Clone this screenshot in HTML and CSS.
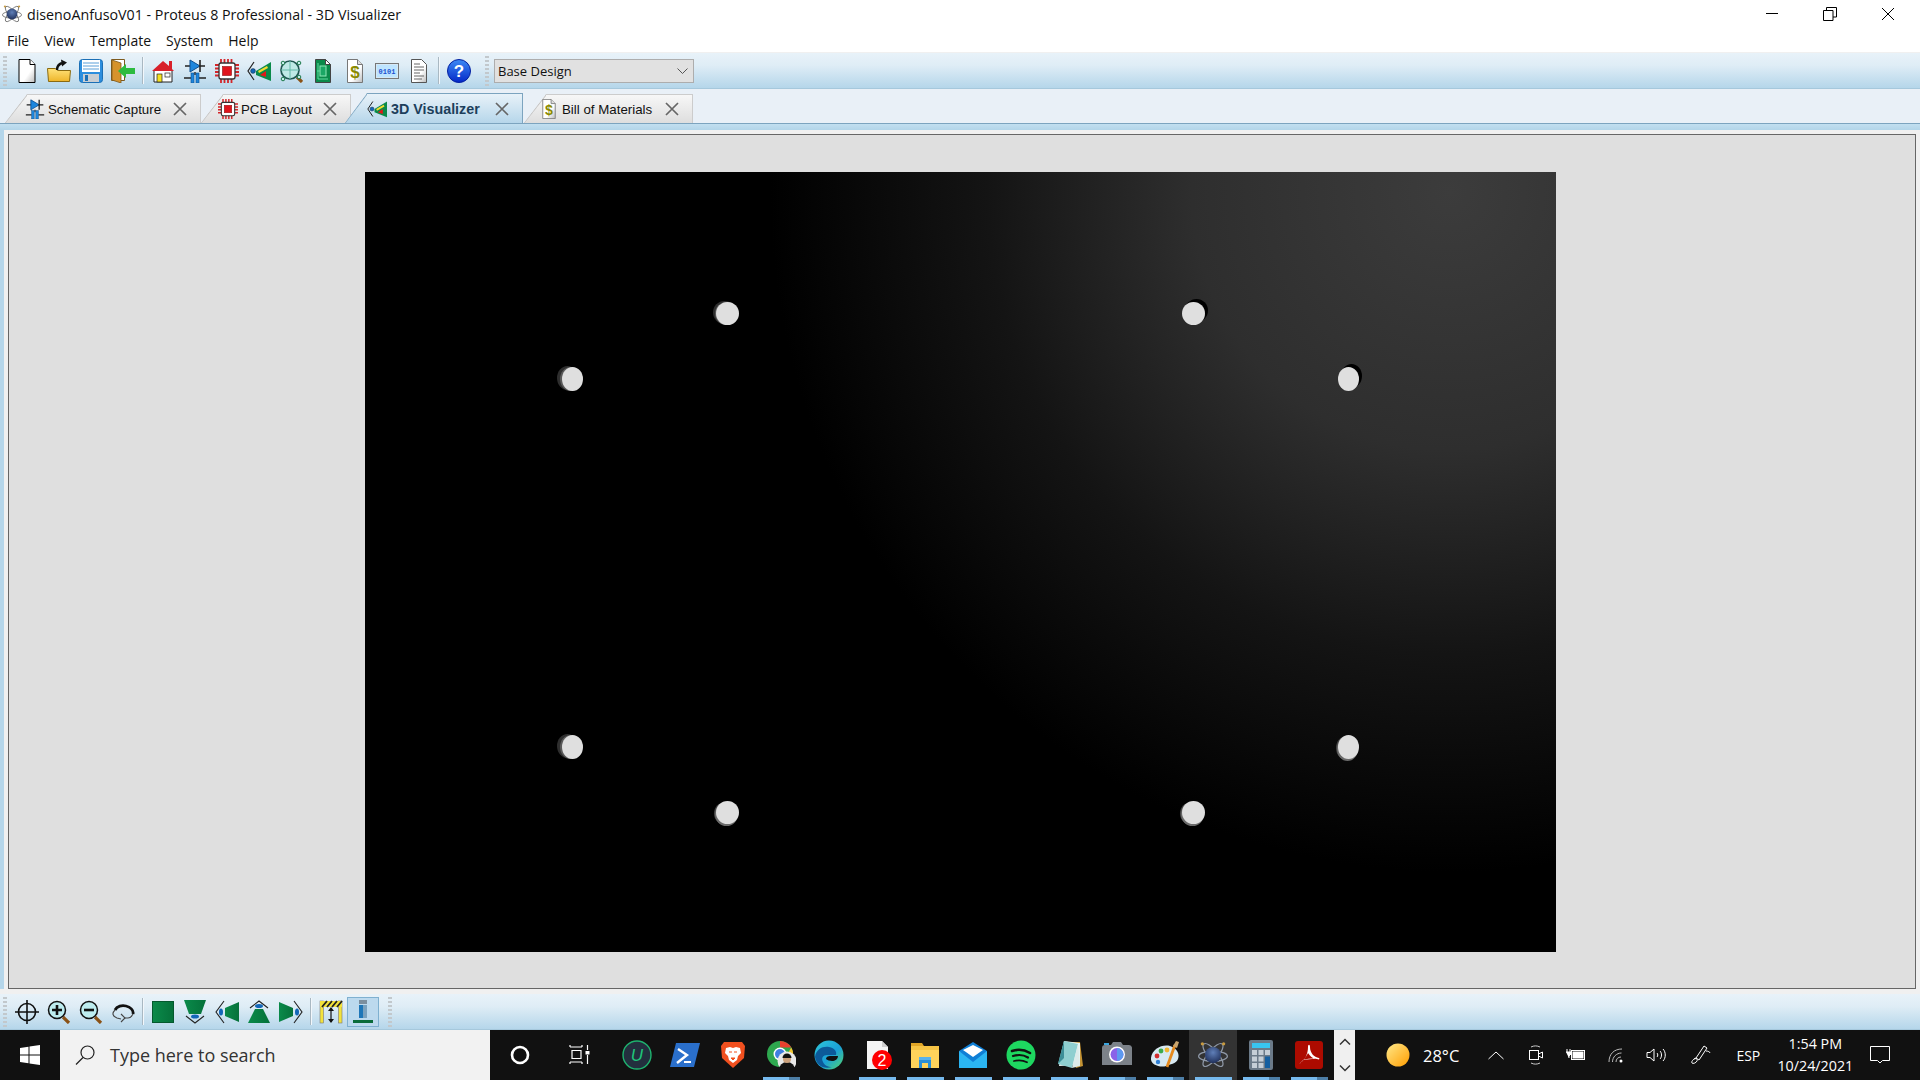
FILE: index.html
```html
<!DOCTYPE html>
<html lang="en">
<head>
  <meta charset="UTF-8" />
  <title>disenoAnfusoV01 - Proteus 8 Professional - 3D Visualizer</title>
  <link rel="stylesheet" href="styles.css">
</head>
<body>
  <!-- shared icons -->
  <svg class="defs" width="0" height="0">
    <defs>
      <linearGradient id="pageG" x1="0" y1="0" x2="1" y2="1"><stop offset=".6" stop-color="#fff"/><stop offset="1" stop-color="#bbb"/></linearGradient>
      <linearGradient id="folderG" x1="0" y1="0" x2="0" y2="1"><stop offset="0" stop-color="#ffe27a"/><stop offset="1" stop-color="#eeb52a"/></linearGradient>
      <linearGradient id="greenG" x1="0" y1="0" x2="1" y2="0"><stop offset="0" stop-color="#0a8a4a"/><stop offset="1" stop-color="#05713a"/></linearGradient>
      <linearGradient id="helpG" x1="0" y1="0" x2="0" y2="1"><stop offset="0" stop-color="#3d8bf5"/><stop offset="1" stop-color="#0428c8"/></linearGradient>
      <linearGradient id="sunG" x1="0" y1="0" x2="1" y2="1"><stop offset="0" stop-color="#ffe98a"/><stop offset="1" stop-color="#ff9d00"/></linearGradient>
      <linearGradient id="edgeG" x1="0" y1="0" x2="1" y2="1"><stop offset="0" stop-color="#2fc7d8"/><stop offset=".55" stop-color="#1aa0d8"/><stop offset="1" stop-color="#55d66a"/></linearGradient>
      <radialGradient id="atomG" cx=".5" cy=".35" r=".7"><stop offset="0" stop-color="#5f7fb8"/><stop offset="1" stop-color="#1c2b55"/></radialGradient>

      <symbol id="i-schematic" viewBox="0 0 24 24">
        <path d="M2 7h20M12 13v3" stroke="#222" stroke-width="1.4" fill="none"/>
        <path d="M7 1l10 6-10 6z" fill="#1d86dd" stroke="#0d4f90"/>
        <path d="M17 1v12" stroke="#222" stroke-width="1.6"/>
        <path d="M1 19h7M16 19h7" stroke="#222" stroke-width="1.6"/>
        <rect x="8" y="14" width="3" height="10" fill="#1d86dd" stroke="#0d4f90" stroke-width=".6"/>
        <rect x="13" y="14" width="3" height="10" fill="#1d86dd" stroke="#0d4f90" stroke-width=".6"/>
      </symbol>
      <symbol id="i-pcb" viewBox="0 0 24 24">
        <path d="M6 0v24M9.500 0v24M13 0v24M16.500 0v24M0 6h24M0 9.500h24M0 13h24M0 16.500h24" stroke="#d3262a" stroke-width="1.800"/>
        <rect x="4" y="4" width="16" height="16" rx="2" fill="#fff" stroke="#333" stroke-width="1.300"/>
        <rect x="7.500" y="7.500" width="9" height="9" fill="#e0141c" stroke="#8c0e12" stroke-width=".6"/>
      </symbol>
      <symbol id="i-3d" viewBox="0 0 24 24">
        <path d="M7 3L1 12l6 9" stroke="#222" stroke-width="1.200" fill="none"/>
        <circle cx="6" cy="12" r="2.400" fill="#1366b8" stroke="#123" stroke-width=".5"/>
        <path d="M9 12L24 3v19L9 16z" fill="#0a8a4a"/>
        <path d="M11 12l9-5 1 2-9 5z" fill="#f2dc30"/>
        <path d="M13 16l6-4v6z" fill="#e41818"/>
      </symbol>
      <symbol id="i-bom" viewBox="0 0 24 24">
        <path d="M4.500 .5h10l5 5v18h-15z" fill="url(#pageG)" stroke="#777"/>
        <path d="M14.500 .5v5h5" fill="#ddd" stroke="#777"/>
        <text x="12" y="19" class="dollar" text-anchor="middle">$</text>
      </symbol>
      <symbol id="i-atom" viewBox="0 0 24 24">
        <g fill="none" stroke="currentColor" stroke-width="1">
          <ellipse cx="12" cy="13" rx="11.500" ry="4" />
          <ellipse cx="12" cy="12" rx="11.500" ry="4" transform="rotate(50 12 12)"/>
          <ellipse cx="12" cy="12" rx="11.500" ry="4" transform="rotate(-50 12 12)"/>
        </g>
        <circle cx="12" cy="12" r="6.500" fill="url(#atomG)"/>
        <circle cx="3.500" cy="3" r="1.300" fill="#c89a3e"/>
        <circle cx="20.500" cy="3" r="1.300" fill="#c89a3e"/>
      </symbol>
      <symbol id="i-close" viewBox="0 0 16 16">
        <path d="M2 2l12 12M14 2L2 14" stroke="#666" stroke-width="1.700"/>
      </symbol>
    </defs>
  </svg>

  <div class="app">
    <header class="titlebar">
      <svg class="appicon" width="20" height="20"><use href="#i-atom"/></svg>
      <span class="title">disenoAnfusoV01 - Proteus 8 Professional - 3D Visualizer</span>
      <div class="winbtns">
        <span class="winbtn"><svg width="14" height="14" viewBox="0 0 14 14"><path d="M1 6.500h12" stroke="#000"/></svg></span>
        <span class="winbtn"><svg width="14" height="14" viewBox="0 0 14 14"><path d="M.5 3.500h9.500v10H.5zM3.500 3.500V.5h10v9.500H10" fill="none" stroke="#000"/></svg></span>
        <span class="winbtn"><svg width="14" height="14" viewBox="0 0 14 14"><path d="M1 1l12 12M13 1L1 13" stroke="#000"/></svg></span>
      </div>
    </header>

    <nav class="menubar">
      <span>File</span><span>View</span><span>Template</span><span>System</span><span>Help</span>
    </nav>

    <div class="toolbar toolbar-top">
      <span class="grip"></span>
      <span class="tbtn"><svg viewBox="0 0 24 24"><path d="M4 .5h11l5 5v18H4z" fill="url(#pageG)" stroke="#000"/><path d="M15 .5v5h5" fill="#fff" stroke="#000"/></svg></span>
      <span class="tbtn"><svg viewBox="0 0 24 24"><path d="M1.500 22.500L.5 9.500h8l2 2h13l-1 11z" fill="url(#folderG)" stroke="#8a6a10"/><path d="M10 11c0-4 2-6 5-7" stroke="#111" stroke-width="2.400" fill="none"/><path d="M14 .5l6 3-5 4z" fill="#111"/></svg></span>
      <span class="tbtn"><svg viewBox="0 0 24 24"><rect x=".5" y=".5" width="23" height="23" rx="3" fill="#2c8ede" stroke="#1b6fb5"/><rect x="3" y="1" width="18" height="12" fill="#fff"/><path d="M4 4h16M4 7h16M4 10h16" stroke="#5a9fd8"/><rect x="4" y="15" width="16" height="8" fill="#c9ced3"/><rect x="6" y="16" width="3" height="6" fill="#1b6fb5"/></svg></span>
      <span class="tbtn"><svg viewBox="0 0 24 24"><path d="M.5 .5h13v21H.5z" fill="#fff" stroke="#7d5a1e"/><path d="M1 1l9 3v20l-9-3z" fill="#d6932c" stroke="#7d5a1e" stroke-width=".8"/><path d="M7 12l8-7v4h9v6h-9v4z" fill="#2dbb3f"/></svg></span>
      <span class="tsep"></span>
      <span class="tbtn"><svg viewBox="0 0 24 24"><path d="M3 11h18v12H3z" fill="#fff" stroke="#222"/><path d="M1 12L12 2l6 5V2h3v8l2 2z" fill="#d8202a"/><rect x="6" y="15" width="5" height="8" fill="#f5e11e" stroke="#222" stroke-width=".7"/><rect x="14" y="14" width="5" height="4" fill="#fff" stroke="#222" stroke-width=".7"/></svg></span>
      <span class="tbtn"><svg><use href="#i-schematic"/></svg></span>
      <span class="tbtn"><svg><use href="#i-pcb"/></svg></span>
      <span class="tbtn"><svg><use href="#i-3d"/></svg></span>
      <span class="tbtn"><svg viewBox="0 0 24 24"><path d="M18 18l5 5" stroke="#8a5216" stroke-width="3.200"/><circle cx="11" cy="11" r="9" fill="#bfe9e6" stroke="#1f5650" stroke-width="1.700"/><path d="M11 2v18M2 11h18" stroke="#64b8a8"/><g fill="#c4ecea" stroke="#1d7a4c"><circle cx="4" cy="4" r="1.800"/><circle cx="20" cy="4" r="1.800"/><circle cx="4" cy="20" r="1.800"/><circle cx="20" cy="18" r="1.800"/></g></svg></span>
      <span class="tbtn"><svg viewBox="0 0 24 24"><path d="M4.500 .5h10l5 5v18h-15z" fill="#0a8a4a" stroke="#444"/><path d="M14.500 .5v5h5z" fill="#fff" stroke="#444"/><rect x="9" y="7" width="6" height="10" fill="#1aa765" stroke="#8fe8b8"/><path d="M7 4v16h10M6 12h3" stroke="#5fdca0" fill="none"/></svg></span>
      <span class="tbtn"><svg><use href="#i-bom"/></svg></span>
      <span class="tbtn"><svg viewBox="0 0 24 24"><rect x=".5" y="4.500" width="23" height="15" fill="#d5e8f5" stroke="#777"/><rect x="2" y="6" width="20" height="12" fill="#bde4ff"/><text x="12" y="15" class="binary" text-anchor="middle">0101</text></svg></span>
      <span class="tbtn"><svg viewBox="0 0 24 24"><path d="M4.500 .5h10l5 5v18h-15z" fill="url(#pageG)" stroke="#555"/><path d="M7 5h6M7 8h10M7 11h10M7 14h6M7 17h10M7 20h8" stroke="#666"/></svg></span>
      <span class="tsep"></span>
      <span class="tbtn"><svg viewBox="0 0 24 24"><circle cx="12" cy="12" r="11.500" fill="url(#helpG)" stroke="#0420a0"/><text x="12" y="18" class="helpmark" text-anchor="middle">?</text></svg></span>
      <span class="grip grip-combo"></span>
      <div class="combo"><span>Base Design</span><svg width="11" height="6" viewBox="0 0 11 6"><path d="M.5 .5l5 5 5-5" stroke="#555" fill="none"/></svg></div>
    </div>

    <div class="tabbar">
      <div class="tab tab-sch"><svg class="tabicon"><use href="#i-schematic"/></svg><span>Schematic Capture</span><svg class="tabx"><use href="#i-close"/></svg></div>
      <div class="tab tab-pcb"><svg class="tabicon"><use href="#i-pcb"/></svg><span>PCB Layout</span><svg class="tabx"><use href="#i-close"/></svg></div>
      <div class="tab tab-3d active"><svg class="tabicon"><use href="#i-3d"/></svg><span>3D Visualizer</span><svg class="tabx"><use href="#i-close"/></svg></div>
      <div class="tab tab-bom"><svg class="tabicon"><use href="#i-bom"/></svg><span>Bill of Materials</span><svg class="tabx"><use href="#i-close"/></svg></div>
    </div>

    <div class="tabstrip"></div>

    <main class="workspace">
      <div class="viewport">
        <div class="board">
          <span class="hole narrow shade-left" style="left:197px;top:195px"></span>
          <span class="hole shade-left-thin" style="left:351px;top:130px"></span>
          <span class="hole shade-right" style="left:817px;top:130px"></span>
          <span class="hole narrow shade-right" style="left:973px;top:195px"></span>
          <span class="hole narrow shade-left" style="left:197px;top:563px"></span>
          <span class="hole shade-low" style="left:351px;top:629px"></span>
          <span class="hole shade-low" style="left:817px;top:629px"></span>
          <span class="hole narrow shade-low" style="left:973px;top:563px"></span>
        </div>
      </div>
    </main>

    <div class="footgap"></div>

    <div class="toolbar toolbar-bottom">
      <span class="grip"></span>
      <span class="tbtn"><svg viewBox="0 0 24 24"><circle cx="12" cy="12" r="8.500" fill="none" stroke="#111" stroke-width="1.600"/><path d="M12 0v24M0 12h24" stroke="#111" stroke-width="1.600"/></svg></span>
      <span class="tbtn"><svg viewBox="0 0 24 24"><path d="M16 17l6 6" stroke="#8a5216" stroke-width="3.200"/><circle cx="10" cy="10" r="8.500" fill="#bdecef" stroke="#111" stroke-width="1.500"/><path d="M10 5v10M5 10h10" stroke="#111" stroke-width="2.600"/></svg></span>
      <span class="tbtn"><svg viewBox="0 0 24 24"><path d="M16 17l6 6" stroke="#8a5216" stroke-width="3.200"/><circle cx="10" cy="10" r="8.500" fill="#bdecef" stroke="#111" stroke-width="1.500"/><path d="M5 10h10" stroke="#111" stroke-width="2.600"/></svg></span>
      <span class="tbtn"><svg viewBox="0 0 24 24"><path d="M4 10c2-4 7-5 11-4s8 4 7 8" stroke="#111" stroke-width="2.800" fill="none"/><path d="M22 14c-1 2-3 4-5 4l-4 0M4 10c-3 3-3 6 2 8l4 1" stroke="#444" stroke-width="1.100" fill="none"/><path d="M10 14l4 4-4 4" stroke="#444" stroke-width="1.100" fill="none"/></svg></span>
      <span class="tsep"></span>
      <span class="tbtn"><svg viewBox="0 0 24 24"><rect x="1.500" y="1.500" width="21" height="21" fill="url(#greenG)" stroke="#04592e"/></svg></span>
      <span class="tbtn"><svg viewBox="0 0 24 24"><path d="M1 0h22l-5 14H6z" fill="url(#greenG)"/><ellipse cx="12" cy="16.500" rx="4" ry="2" fill="#1366b8"/><path d="M3 16l9 7 9-7" stroke="#222" stroke-width="1.100" fill="none"/></svg></span>
      <span class="tbtn"><svg viewBox="0 0 24 24"><path d="M9 1L1 12l8 11" stroke="#222" stroke-width="1.100" fill="none"/><ellipse cx="6" cy="12" rx="2" ry="3.500" fill="#1366b8"/><path d="M10 8l14-6v20l-14-6z" fill="url(#greenG)"/></svg></span>
      <span class="tbtn"><svg viewBox="0 0 24 24"><path d="M3 8l9-7 9 7" stroke="#222" stroke-width="1.100" fill="none"/><ellipse cx="12" cy="6" rx="4" ry="2" fill="#1366b8"/><path d="M8 9h8l7 14H1z" fill="url(#greenG)"/></svg></span>
      <span class="tbtn"><svg viewBox="0 0 24 24"><path d="M15 1l8 11-8 11" stroke="#222" stroke-width="1.100" fill="none"/><ellipse cx="18" cy="12" rx="2" ry="3.500" fill="#1366b8"/><path d="M14 8L0 2v20l14-6z" fill="url(#greenG)"/></svg></span>
      <span class="tsep"></span>
      <span class="tbtn"><svg viewBox="0 0 24 24"><rect x="1" y="1" width="3.500" height="22" fill="#f3e23b" stroke="#777" stroke-width=".6"/><rect x="19.500" y="1" width="3.500" height="22" fill="#f3e23b" stroke="#777" stroke-width=".6"/><rect x="1" y="1" width="22" height="6" fill="#f3e23b"/><path d="M3 7l5-6M8 7l5-6M13 7l5-6M18 7l5-6" stroke="#222" stroke-width="1.800"/><path d="M12 8v14" stroke="#111" stroke-width="1.200"/><path d="M9 11l3-4 3 4zM9 19l3 4 3-4z" fill="#111"/></svg></span>
      <span class="tbtn tbtn-on"><svg viewBox="0 0 24 24"><rect x="8" y="0" width="8" height="4" fill="#7c8f9f"/><rect x="8" y="5" width="8" height="13" fill="#7ba2bf"/><rect x="8" y="5" width="4" height="13" fill="#1e76b8"/><rect x="2" y="20" width="20" height="3" fill="#0a6b3a"/></svg></span>
      <span class="grip grip-end"></span>
    </div>

    <footer class="taskbar">
      <div class="startbtn"><svg width="20" height="20" viewBox="0 0 20 20"><path d="M0 3l8.500-1.300V9.500H0zM9.500 1.500L20 0v9.500H9.500zM0 10.500h8.500v7.800L0 17zM9.500 10.500H20V20L9.500 18.500z" fill="#fff"/></svg></div>
      <div class="searchbox">
        <svg width="20" height="20" viewBox="0 0 20 20"><circle cx="12.500" cy="7.500" r="6.500" fill="none" stroke="#222" stroke-width="1.200"/><path d="M8 12.500L1 19.500" stroke="#222" stroke-width="1.300"/></svg>
        <span>Type here to search</span>
      </div>
      <span class="sysbtn"><svg width="20" height="20" viewBox="0 0 20 20"><circle cx="10" cy="10" r="8" fill="none" stroke="#fff" stroke-width="2.600"/></svg></span>
      <span class="sysbtn sysbtn-task"><svg width="22" height="20" viewBox="0 0 22 20"><path d="M1 0v2M13 0v2M1 2h12M3 5.500h9v8H3zM1 17h12M1 17v2M13 17v2M18.500 0v5M18.500 10v9" stroke="#fff" fill="none" stroke-width="1.200"/><rect x="16.500" y="6" width="4" height="3.500" fill="#fff"/></svg></span>

      <span class="app-slot"><svg viewBox="0 0 30 30"><circle cx="15" cy="15" r="14" fill="#232f3e" stroke="#1fb26f" stroke-width="1.400"/><text x="15" y="21" class="iu" text-anchor="middle">U</text></svg></span>
      <span class="app-slot"><svg viewBox="0 0 30 30"><path d="M6 3h24l-6 24H0z" fill="#2a6fcb"/><path d="M8 9l9 6-10 8" stroke="#fff" stroke-width="2.400" fill="none"/><path d="M14 22h7" stroke="#fff" stroke-width="2"/></svg></span>
      <span class="app-slot"><svg viewBox="0 0 30 30"><path d="M6 2h18l3 4-1 12-11 10L4 18 3 6z" fill="#f1501f"/><path d="M8 8l4-1 3 1 3-1 4 1 1 5-3 3-1 4-4 3-4-3-1-4-3-3z" fill="#fff"/><path d="M11 12h3M16 12h3M13 18l2 2 2-2z" fill="#f1501f" stroke="#f1501f"/></svg></span>
      <span class="app-slot open stacked"><svg viewBox="0 0 30 30"><circle cx="14" cy="14" r="13" fill="#2ea84f"/><path d="M14 1a13 13 0 0 1 11.300 6.500H14z" fill="#e8412f"/><path d="M25.300 7.500A13 13 0 0 1 14 27l5-9z" fill="#f4c430"/><circle cx="14" cy="14" r="6.500" fill="#fff"/><circle cx="14" cy="14" r="5" fill="#3f7fe0"/><circle cx="21" cy="21" r="9.500" fill="#e8e8e8"/><path d="M13 30a8 8 0 0 1 16 0z" fill="#111"/><circle cx="21" cy="19" r="4" fill="#caa07c"/><path d="M16.500 18a4.500 4.500 0 0 1 9 0z" fill="#111"/></svg></span>
      <span class="app-slot"><svg viewBox="0 0 30 30"><circle cx="15" cy="15" r="14.500" fill="url(#edgeG)"/><path d="M1 17C2 9 9 6 15 7c6 1 8 5 7 8h-9c-4 0-6 3-4 7 1 3 5 5 9 5-9 3-16-3-17-10z" fill="#0c5a9a"/><path d="M12 19c0-2 2-3 4-3h8c0 3-3 5-6 5-2 0-5-1-6-2z" fill="#111"/></svg></span>
      <span class="app-slot open"><svg viewBox="0 0 30 30"><path d="M5 1h15l6 6v22H5z" fill="#f4f4f4"/><path d="M20 1v6h6z" fill="#cfcfcf"/><circle cx="20" cy="20" r="10" fill="#f00"/><text x="20" y="26" class="badge" text-anchor="middle">2</text></svg></span>
      <span class="app-slot open"><svg viewBox="0 0 30 30"><path d="M1 3h11l2 3H1z" fill="#e0a526"/><path d="M1 6h28v22H1z" fill="#ffd35b"/><path d="M1 6h28v4H1z" fill="#f6c445"/><path d="M9 19h12v9h-3v-5h-6v5H9z" fill="#2a8ed6"/><rect x="9" y="17" width="12" height="3" fill="#5ab3ec"/></svg></span>
      <span class="app-slot open"><svg viewBox="0 0 30 30"><path d="M1 11L15 2l14 9v17H1z" fill="#0f7fd6"/><path d="M1 11l14 11 14-11v17H1z" fill="#2bb5f2"/><path d="M5 10l10-5 10 5-10 7z" fill="#fff"/></svg></span>
      <span class="app-slot open"><svg viewBox="0 0 30 30"><circle cx="15" cy="15" r="14.500" fill="#1ed760"/><g stroke="#111" fill="none" stroke-linecap="round"><path d="M6 11c6-2 13-1 18 2" stroke-width="2.600"/><path d="M7 16c5-1.500 11-1 15 1.500" stroke-width="2.200"/><path d="M8 21c4-1 9-.8 13 1.200" stroke-width="1.800"/></g></svg></span>
      <span class="app-slot open"><svg viewBox="0 0 30 30"><path d="M12 2h14l3 24-7 2z" fill="#c49334"/><path d="M10 1l16 2 0 22-21 1z" fill="#e6f3f2"/><path d="M10 1L4 24l14 4 6-24z" fill="#8fcfd0"/><path d="M18 28l6-24 2 22z" fill="#dcebea"/><path d="M10 1L4 24l6-6z" fill="#3d8f98"/></svg></span>
      <span class="app-slot open stacked"><svg viewBox="0 0 30 30"><path d="M9 5l2-3h8l2 3h6a3 3 0 0 1 3 2.500V25H0V8a3 3 0 0 1 3-3z" fill="#7c8289"/><rect x="2" y="3" width="5" height="2" fill="#3ba5de"/><circle cx="15" cy="14.500" r="8" fill="#fff"/><circle cx="15" cy="14.500" r="6.500" fill="#8a63e8"/><path d="M15 8a6.500 6.500 0 0 1 0 13z" fill="#5d9af0"/></svg></span>
      <span class="app-slot open stacked"><svg viewBox="0 0 30 30"><path d="M1 18C2 9 12 4 20 6c7 2 10 8 8 13-2 5-8 5-12 7-5 2-16-1-15-8z" fill="#d7e9f2"/><circle cx="7" cy="16" r="2.400" fill="#d22f2f"/><circle cx="11" cy="11" r="2.400" fill="#3dab4b"/><circle cx="17" cy="10" r="2.400" fill="#f2b632"/><circle cx="8" cy="22" r="2.200" fill="#2e7fd6"/><path d="M17 27L25 5" stroke="#e58a1e" stroke-width="2.800"/><path d="M23 6l3-5 3 1-2 6z" fill="#c9a56e"/></svg></span>
      <span class="app-slot open current"><svg viewBox="0 0 24 24"><use href="#i-atom"/></svg></span>
      <span class="app-slot open stacked"><svg viewBox="0 0 30 30"><rect x="3" y="0" width="24" height="30" rx="2" fill="#6b7a88"/><rect x="6" y="3" width="18" height="5" fill="#38c5f0"/><g fill="#c5ced6"><rect x="6" y="10" width="5" height="5"/><rect x="12.500" y="10" width="5" height="5"/><rect x="19" y="10" width="5" height="5"/><rect x="6" y="16.500" width="5" height="5"/><rect x="12.500" y="16.500" width="5" height="5"/><rect x="6" y="23" width="5" height="5"/><rect x="12.500" y="23" width="5" height="5"/></g><rect x="19" y="16.500" width="5" height="11.500" fill="#155fa0"/></svg></span>
      <span class="app-slot open stacked"><svg viewBox="0 0 30 30"><rect x="1" y="1" width="28" height="28" rx="3" fill="#ad0b00"/><path d="M6 23c5-3 8-9 8-16 0-3 2-3 2 0 0 6 4 10 9 11 1 1 0 2-2 1-7-1-13 0-15 2-2 3-3 3-2 2zM14 13c-1 2-3 5-4 7 4-1 7-1 11-1-3-1-5-3-7-6z" fill="#fff" fill-rule="evenodd"/></svg></span>

      <span class="scroller"><svg width="12" height="8" viewBox="0 0 12 8"><path d="M1 6.500l5-5 5 5" stroke="#333" stroke-width="1.500" fill="none"/></svg><svg width="12" height="8" viewBox="0 0 12 8"><path d="M1 1.500l5 5 5-5" stroke="#333" stroke-width="1.500" fill="none"/></svg></span>

      <div class="weather"><svg width="24" height="24" viewBox="0 0 24 24"><circle cx="12" cy="12" r="11.500" fill="url(#sunG)"/></svg><span>28°C</span></div>

      <div class="tray">
        <span class="trayitem"><svg width="16" height="9" viewBox="0 0 16 9"><path d="M.5 8L8 1l7.500 7" stroke="#fff" fill="none"/></svg></span>
        <span class="trayitem"><svg width="16" height="20" viewBox="0 0 16 20"><path d="M3 2c3-1.500 6-1.500 9 0M3 18c3 1.500 6 1.500 9 0" stroke="#ccc" fill="none"/><rect x="1.500" y="5.500" width="9" height="9" fill="none" stroke="#fff"/><path d="M10.500 9l4-2v6l-4-2" stroke="#fff" fill="none"/></svg></span>
        <span class="trayitem"><svg width="20" height="12" viewBox="0 0 20 12"><path d="M1 0v3M4 0v3" stroke="#fff"/><path d="M0 3h5v2l-2 2v2" stroke="#fff" fill="#fff"/><rect x="5.500" y="1.500" width="13" height="9" fill="none" stroke="#fff"/><rect x="6.500" y="2.500" width="11" height="7" fill="#fff"/></svg></span>
        <span class="trayitem"><svg width="16" height="16" viewBox="0 0 16 16"><path d="M1 15C1 7 6 2 14 2M4.500 15c0-5 4-9 9-9M8 15c0-3 2-5 5-5" stroke="#bbb" fill="none"/><circle cx="13" cy="14" r="1.500" fill="#fff"/></svg></span>
        <span class="trayitem"><svg width="20" height="16" viewBox="0 0 20 16"><path d="M1 5.500h3l4-3.500v12l-4-3.500H1z" fill="none" stroke="#fff"/><path d="M11 6c1 1 1 3 0 4M14 4c2 2 2 6 0 8M17 2c3 3 3 9 0 12" stroke="#fff" fill="none"/></svg></span>
        <span class="trayitem ti-pen"><svg width="22" height="20" viewBox="0 0 22 20"><path d="M14 1l3 2-8 12-3-2zM16 6c2 0 4 1 4 2M6 13c-3 1-5 4-4 5s4 0 5-2-1-3-3-2" stroke="#fff" fill="none"/></svg></span>
        <span class="lang">ESP</span>
        <div class="clock"><span>1:54 PM</span><span>10/24/2021</span></div>
        <span class="notif"><svg width="20" height="18" viewBox="0 0 20 18"><path d="M.5 .5h19v14h-7l-2.500 2.500-2.500-2.500h-7z" fill="none" stroke="#fff"/></svg></span>
      </div>
    </footer>
  </div>
</body>
</html>
```

FILE: styles.css
```css
* {
  box-sizing: border-box;
}

body {
  margin: 0;
  width: 1921px;
  height: 1080px;
  overflow: hidden;
  background-color: #fff;
  font-family: "Open Sans", sans-serif;
  color: #111;
}

.defs {
  position: absolute;
}

.app {
  width: 1920px;
  height: 1080px;
  display: flex;
  flex-direction: column;
}

/* title + menu */
.titlebar {
  height: 28px;
  display: flex;
  align-items: center;
  padding-left: 2px;
  background-color: #fff;
}

.appicon {
  margin-right: 5px;
  color: #6b6b6b;
}

.title {
  font-size: 14.25px;
}

.winbtns {
  margin-left: auto;
  display: flex;
  padding-right: 3px;
}

.winbtn {
  width: 58px;
  height: 28px;
  display: flex;
  align-items: center;
  justify-content: center;
}

.menubar {
  height: 24px;
  display: flex;
  align-items: center;
  gap: 15px;
  padding-left: 7px;
  font-size: 14px;
  background-color: #fff;
}

/* toolbars */
.toolbar {
  display: flex;
  align-items: center;
  height: 37px;
  border-top: 1px solid #f0f0f0;
  border-bottom: 1px solid #a6c8dc;
  background: linear-gradient(#e8f2f9, #dfedf6 35%, #b5d6ea);
}

.grip {
  width: 4px;
  height: 30px;
  margin: 0 4px 0 3px;
  background: repeating-linear-gradient(#c2c8cc 0 2px, transparent 2px 4px);
}

.tbtn {
  width: 32px;
  height: 30px;
  display: flex;
  align-items: center;
  justify-content: center;
}

.tbtn svg {
  width: 24px;
  height: 24px;
}

.tbtn-on {
  background-color: #bcd9ee;
  border: 1px solid #7fb0d0;
}

.tsep {
  width: 2px;
  height: 27px;
  margin: 0 3px;
  background-color: #a9b8c2;
  border-right: 1px solid #f2f7fb;
}

.grip-combo {
  margin: 0 5px 0 10px;
}

.grip-end {
  margin-left: 9px;
}

.combo {
  width: 200px;
  height: 24px;
  display: flex;
  align-items: center;
  justify-content: space-between;
  padding: 0 5px 0 3px;
  font-size: 13px;
  background-color: #e1e1e1;
  border: 1px solid #adadad;
}

/* tabs */
.tabbar {
  height: 35px;
  display: flex;
  align-items: flex-end;
  padding-left: 5px;
  background-color: #e9f0f7;
  border-bottom: 1px solid #7ca4bf;
}

.tab {
  height: 29px;
  display: flex;
  align-items: center;
  font-size: 13.3px;
  font-family: "Liberation Sans", sans-serif;
  border-top: 1px solid #ccc;
  border-right: 1px solid #ccc;
  clip-path: polygon(22px 0, 100% 0, 100% 100%, 0 100%);
  background:
    linear-gradient(to top left, transparent calc(50% - 1px), #c0c0c0, transparent calc(50% + 1px)) left / 22px 100% no-repeat,
    linear-gradient(#f7f7f7, #dedede);
}

.tab-sch {
  width: 196px;
  padding-left: 20px;
}

.tab-pcb {
  width: 150px;
  padding-left: 17px;
}

.tab-3d {
  width: 178px;
  height: 30px;
  margin-left: -6px;
  padding-left: 22px;
}

.tab-bom {
  width: 169px;
  margin-left: 1px;
  padding-left: 15px;
}

.tab.active {
  font-size: 14.3px;
  font-weight: bold;
  color: #1d3f5c;
  border-color: #7ca4bf;
  background:
    linear-gradient(to top left, transparent calc(50% - 1px), #7ca4bf, transparent calc(50% + 1px)) left / 22px 100% no-repeat,
    linear-gradient(#e8f2f9, #b6d6ea);
}

.tabicon {
  width: 20px;
  height: 20px;
  margin-right: 3px;
  flex-shrink: 0;
}

.tab-3d .tabicon {
  margin-right: 4px;
}

.tabx {
  width: 16px;
  height: 16px;
  margin-left: auto;
  margin-right: 12px;
}

.tabstrip {
  height: 6px;
  background: linear-gradient(#c2dff0, #b3d5e9);
}

/* main area */
.workspace {
  flex: 1;
  display: flex;
  padding: 4px 4px 0;
  border-left: 4px solid #b5d6ea;
  background-color: #f0f0f0;
}

.viewport {
  flex: 1;
  padding: 37px 0 0 356px;
  background-color: #dfdfdf;
  border: 1px solid #666;
}

.board {
  position: relative;
  width: 1191px;
  height: 780px;
  background:
    radial-gradient(circle 680px at 1085px 20px, #3c3c3c, #2e2e2e 38%, #141414 68%, #000 100%);
  background-color: #000;
}

.hole {
  position: absolute;
  width: 23px;
  height: 23px;
  border-radius: 50%;
  background-color: #dfdfdf;
}

.hole.narrow {
  width: 21px;
  height: 24px;
}

.shade-left {
  box-shadow: -2px 0 0 #5a5a5a, -5px -1px 0 #2e2e2e;
}

.shade-left-thin {
  box-shadow: -1px 0 0 #5a5a5a, -3px -1px 0 #2e2e2e;
}

.shade-right {
  box-shadow: 3px -3px 0 #000;
}

.shade-low {
  box-shadow: -1px 2px 0 #6a6a6a, -2px 1px 0 #444;
}

.footgap {
  height: 4px;
  background-color: #f0f0f0;
}

/* windows taskbar */
.taskbar {
  height: 50px;
  display: flex;
  align-items: stretch;
  background-color: #111;
  color: #fff;
}

.startbtn {
  width: 60px;
  display: flex;
  align-items: center;
  justify-content: center;
}

.searchbox {
  width: 430px;
  display: flex;
  align-items: center;
  gap: 15px;
  padding-left: 15px;
  font-size: 18px;
  color: #333;
  background-color: #f2f2f2;
}

.sysbtn {
  width: 60px;
  display: flex;
  align-items: center;
  justify-content: center;
}

.sysbtn-task {
  margin-right: 3px;
}

.app-slot {
  position: relative;
  width: 48px;
  color: #8f99a8;
  display: flex;
  align-items: center;
  justify-content: center;
}

.app-slot svg {
  width: 30px;
  height: 30px;
}

.app-slot.open::after {
  content: "";
  position: absolute;
  left: 6px;
  right: 5px;
  bottom: 0;
  height: 3px;
  background-color: #76b9ed;
}

.app-slot.stacked::after {
  background: linear-gradient(to right, #76b9ed 70%, #4d7ea6 70%);
}

.app-slot.current {
  background-color: #333;
}

.scroller {
  width: 21px;
  margin-left: 1px;
  padding: 8px 0;
  display: flex;
  flex-direction: column;
  align-items: center;
  justify-content: space-between;
  background-color: #f0f0f0;
}

.weather {
  display: flex;
  align-items: center;
  gap: 13px;
  margin-left: 31px;
  font-size: 16.5px;
}

.tray {
  display: flex;
  align-items: center;
  margin-left: 17px;
  flex: 1;
}

.trayitem {
  width: 40px;
  display: flex;
  align-items: center;
  justify-content: center;
}

.ti-pen {
  margin-left: 5px;
}

.lang {
  width: 46px;
  margin-left: 4px;
  text-align: center;
  font-size: 14px;
}

.clock {
  width: 84px;
  margin-left: 2px;
  display: flex;
  flex-direction: column;
  align-items: center;
  gap: 4px;
  font-size: 14.3px;
  line-height: 18px;
}

.notif {
  margin-left: 13px;
  display: flex;
}

/* small labels inside icons */
.dollar {
  font: bold 17px "Liberation Sans", sans-serif;
  fill: #8a8a00;
}

.binary {
  font: bold 7px "Liberation Mono", monospace;
  fill: #1a50d0;
}

.helpmark {
  font: bold 17px "Liberation Sans", sans-serif;
  fill: #fff;
}

.iu {
  font: italic 17px "Liberation Sans", sans-serif;
  fill: #1fc57a;
}

.badge {
  font: 16px "Liberation Sans", sans-serif;
  fill: #fff;
}
```
